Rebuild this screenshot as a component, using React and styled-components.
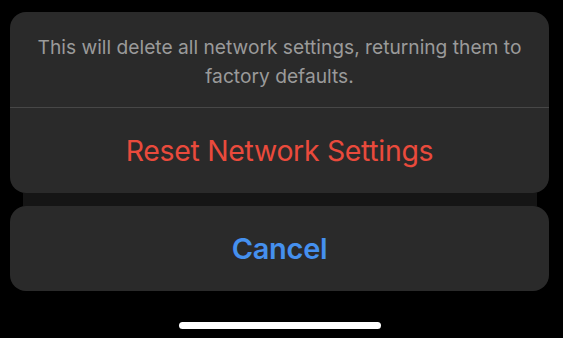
import styled, { createGlobalStyle } from "styled-components";

function App() {
  return (
    <>
      <GlobalStyle />
      <Sheet>
        <ActionGroup>
          <Message>
            This will delete all network settings, returning them to factory
            defaults.
          </Message>
          <Divider />
          <ActionButton tone="destructive">Reset Network Settings</ActionButton>
        </ActionGroup>
        <Backdrop />
        <ActionGroup>
          <ActionButton tone="cancel">Cancel</ActionButton>
        </ActionGroup>
        <HomeIndicator />
      </Sheet>
    </>
  );
}

const GlobalStyle = createGlobalStyle`
  html, body {
    margin: 0;
    padding: 0;
    background: #000;
  }

  body {
    font-family: Inter, "Noto Sans", sans-serif;
    -webkit-font-smoothing: antialiased;
  }
`;

const Sheet = styled.div`
  width: 563px;
  height: 338px;
  box-sizing: border-box;
  padding: 12px 14px 0 10px;
  display: flex;
  flex-direction: column;
  background: #000;
  overflow: hidden;
`;

const ActionGroup = styled.div`
  display: flex;
  flex-direction: column;
  background: #2a2a2a;
  border-radius: 16px;
  overflow: hidden;
`;

const Message = styled.p`
  margin: 0;
  height: 95px;
  box-sizing: border-box;
  padding: 21px 20px 0;
  font-size: 19.2px;
  line-height: 29px;
  color: #9a9a9a;
  text-align: center;
`;

const Divider = styled.div`
  height: 1px;
  background: #474747;
`;

const ActionButton = styled.button`
  height: 85px;
  border: 0;
  background: transparent;
  font-family: Inter, "Noto Sans", sans-serif;
  font-size: ${(p) => (p.tone === "cancel" ? "29px" : "28.4px")};
  letter-spacing: -0.3px;
  font-weight: ${(p) => (p.tone === "cancel" ? 600 : 400)};
  color: ${(p) => (p.tone === "cancel" ? "#4590ee" : "#ea4a3c")};
  cursor: pointer;
`;

const Backdrop = styled.div`
  height: 13px;
  margin: 0 12px 0 13px;
  background: #151515;
`;

const HomeIndicator = styled.div`
  width: 202px;
  height: 7px;
  margin: 31px auto 0;
  border-radius: 4px;
  background: #fff;
`;

export default App;
